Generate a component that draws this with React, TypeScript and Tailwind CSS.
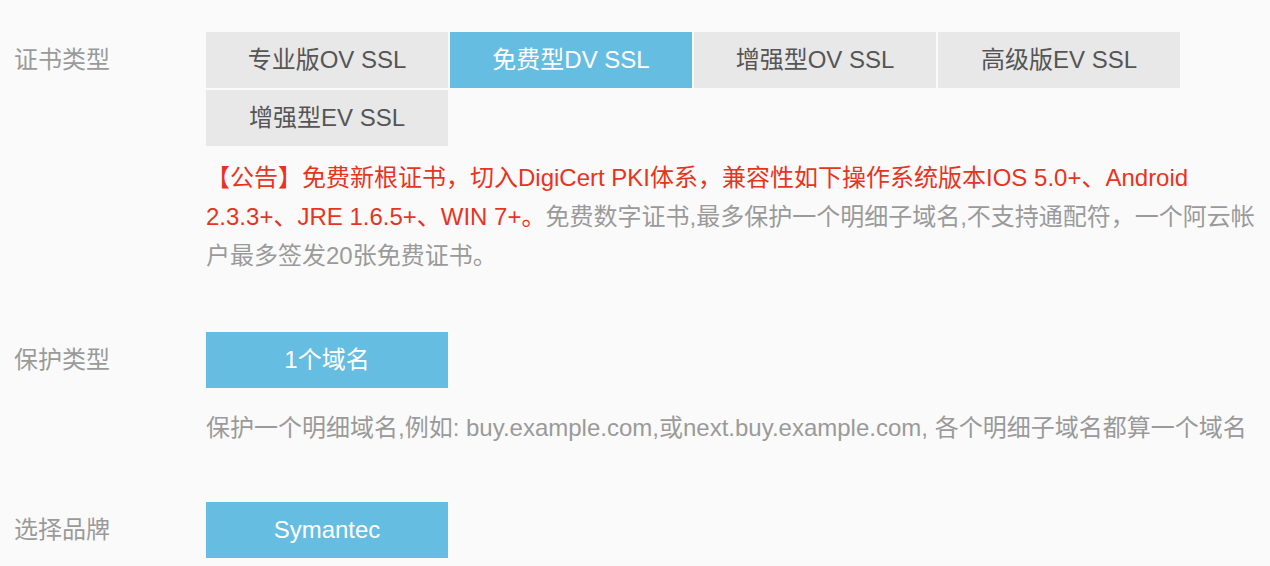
import { useState } from "react";

const certTypes = ["专业版OV SSL", "免费型DV SSL", "增强型OV SSL", "高级版EV SSL", "增强型EV SSL"];

function OptionButton({ label, active, onClick }: { label: string; active?: boolean; onClick?: () => void }) {
  return (
    <button
      onClick={onClick}
      className={`h-[56px] w-[242px] text-[24px] ${active ? "bg-[#66bde2] text-white" : "bg-[#e8e8e8] text-[#555555]"}`}
    >
      {label}
    </button>
  );
}

function Row({ label, children }: { label: string; children: React.ReactNode }) {
  return (
    <div className="flex">
      <div className="w-[206px] shrink-0 pl-[14px] text-[24px] leading-[56px] text-[#9a9a9a]">{label}</div>
      <div className="w-[1056px]">{children}</div>
    </div>
  );
}

export default function App() {
  const [cert, setCert] = useState(1);

  return (
    <div
      className="min-h-[566px] bg-[#fafafa] pt-[32px]"
      style={{ fontFamily: '"Liberation Sans", "Noto Sans CJK SC", sans-serif' }}
    >
      <Row label="证书类型">
        <div className="flex flex-wrap gap-[2px]">
          {certTypes.map((t, i) => (
            <OptionButton key={t} label={t} active={i === cert} onClick={() => setCert(i)} />
          ))}
        </div>
        <p className="mt-[12px] text-[24px] leading-[39px] text-[#9a9a9a]">
          <span className="text-[#e8341f]">
            【公告】免费新根证书，切入DigiCert PKI体系，兼容性如下操作系统版本IOS 5.0+、Android 2.3.3+、JRE 1.6.5+、WIN 7+。
          </span>
          免费数字证书,最多保护一个明细子域名,不支持通配符，一个阿云帐户最多签发20张免费证书。
        </p>
      </Row>

      <div className="mt-[57px]">
        <Row label="保护类型">
          <OptionButton label="1个域名" active />
          <p className="mt-[20px] whitespace-nowrap text-[24px] leading-[39px] text-[#9a9a9a]">
            保护一个明细域名,例如: buy.example.com,或next.buy.example.com, 各个明细子域名都算一个域名
          </p>
        </Row>
      </div>

      <div className="mt-[55px]">
        <Row label="选择品牌">
          <OptionButton label="Symantec" active />
        </Row>
      </div>
    </div>
  );
}
